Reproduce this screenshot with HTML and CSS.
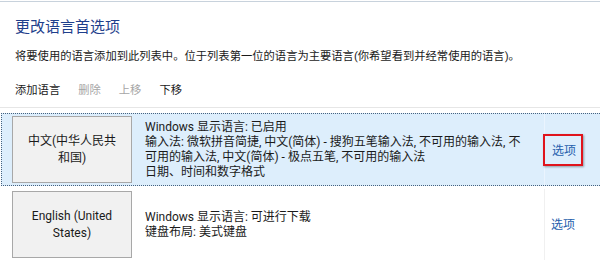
FILE: index.html
```html
<!DOCTYPE html>
<html>

<head lang="zh-CN">
    <meta charset="UTF-8">
    <title>更改语言首选项</title>
    <link rel="stylesheet" href="styles.css">
</head>

<body>
    <div class="page">
        <div class="header">
            <h1 class="page-title">更改语言首选项</h1>
            <p class="page-desc">将要使用的语言添加到此列表中。位于列表第一位的语言为主要语言(你希望看到并经常使用的语言)。</p>
            <div class="toolbar">
                <a href="javascript:;" class="tool">添加语言</a>
                <a href="javascript:;" class="tool disabled">删除</a>
                <a href="javascript:;" class="tool disabled">上移</a>
                <a href="javascript:;" class="tool">下移</a>
            </div>
        </div>
        <!-- 语言列表 -->
        <div class="lang-list">
            <div class="lang-row selected">
                <div class="lang-name">
                    <div class="lang-btn">中文(中华人民共<br>和国)</div>
                </div>
                <div class="lang-info">
                    Windows 显示语言: 已启用<br>
                    输入法: 微软拼音简捷, 中文(简体) - 搜狗五笔输入法, 不可用的输入法, 不可用的输入法, 中文(简体) - 极点五笔, 不可用的输入法<br>
                    日期、时间和数字格式
                </div>
                <div class="lang-opt">
                    <span class="mark"><a href="javascript:;">选项</a></span>
                </div>
            </div>
            <div class="lang-row">
                <div class="lang-name">
                    <div class="lang-btn">English (United<br>States)</div>
                </div>
                <div class="lang-info">
                    Windows 显示语言: 可进行下载<br>
                    键盘布局: 美式键盘
                </div>
                <div class="lang-opt">
                    <a href="javascript:;">选项</a>
                </div>
            </div>
        </div>
    </div>
</body>

</html>
```

FILE: styles.css
```css
/* 重置 */
body,
h1,
p,
div {
    margin: 0;
    padding: 0;
}

body {
    background: #ffffff;
    color: #1a1a1a;
    font-family: Roboto, "Noto Sans CJK SC", sans-serif;
    font-size: 12px;
    overflow: hidden;
}

a {
    text-decoration: none;
    color: #1a1a1a;
}

/* 窗口顶部边线 */
.page {
    margin-top: 1px;
    border-top: 1px solid #c8d2dc;
}

.header {
    padding: 15px 0 8px 0;
    border-bottom: 1px solid #e6e6e6;
}

.page-title {
    padding-left: 15px;
    font-size: 15px;
    font-weight: normal;
    line-height: 20px;
    color: #1f3f8c;
}

.page-desc {
    margin-top: 12px;
    padding-left: 15px;
    font-size: 11.3px;
    line-height: 16px;
}

/* 工具栏 */
.toolbar {
    display: flex;
    gap: 18px;
    margin-top: 18px;
    padding-left: 15px;
    font-size: 11.3px;
    line-height: 16px;
}

.toolbar .disabled {
    color: #a6a6a6;
}

/* 列表 */
.lang-list {
    margin-top: 5px;
}

.lang-row {
    display: flex;
    height: 71px;
    margin-left: 1px;
    margin-right: -4px;
    border: 1px dotted transparent;
}

.lang-row + .lang-row {
    margin-top: 2px;
}

.lang-row.selected {
    background: #ddeefc;
    border-color: #46627f;
}

.lang-name {
    width: 133px;
    padding-left: 10px;
    display: flex;
    align-items: center;
    flex-shrink: 0;
}

.lang-btn {
    width: 118px;
    height: 65px;
    border: 1px solid #a8a8a8;
    background: #f1f1f1;
    display: flex;
    align-items: center;
    justify-content: center;
    text-align: center;
    line-height: 17px;
}

.lang-info {
    width: 378px;
    padding-right: 21px;
    display: flex;
    align-items: center;
    line-height: 15px;
    flex-shrink: 0;
}

.lang-opt {
    flex: 1;
    border-left: 1px solid #f0f0f0;
    display: flex;
    align-items: center;
    padding-left: 6px;
}

.selected .lang-opt {
    border-left-color: #eaf4fe;
}

.lang-opt a {
    color: #2660ac;
    line-height: 16px;
}

/* 红色标注框 */
.mark {
    display: inline-block;
    margin-left: -8px;
    padding: 7px 5px 5px 7px;
    border: 2px solid #e0141c;
    box-shadow: 1px 1px 2px rgba(0, 0, 0, .35);
}
```
